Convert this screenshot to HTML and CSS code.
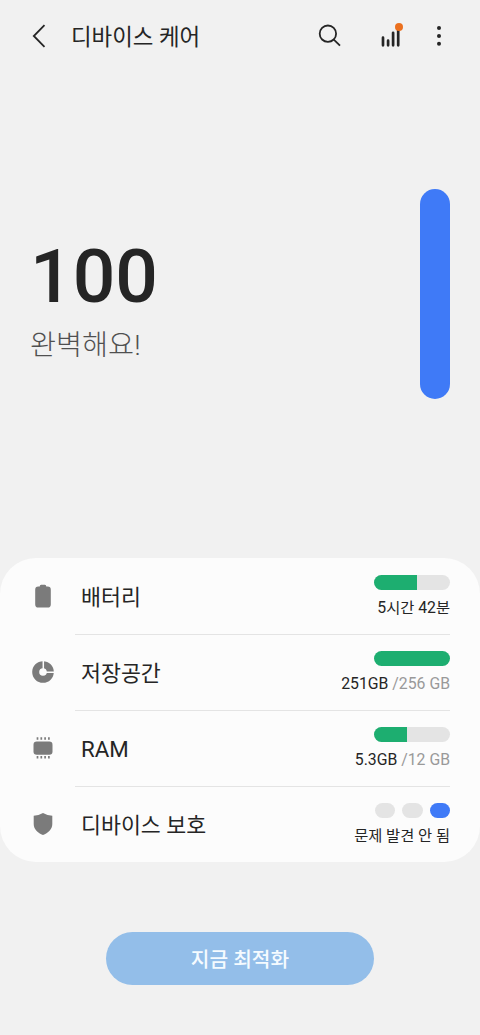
FILE: index.html
```html
<!DOCTYPE html>
<html lang="ko">
<head>
<meta charset="utf-8">
<title>디바이스 케어</title>
<link rel="stylesheet" href="styles.css">
</head>
<body>
<main class="screen">
  <header class="bar">
    <svg class="back" width="14" height="24" viewBox="0 0 14 24"><path d="M12.5 1.2 1.8 12l10.7 10.8"/></svg>
    <h1 class="title">디바이스 케어</h1>
    <svg class="search" width="24" height="24" viewBox="0 0 24 24"><circle cx="9.9" cy="9.7" r="8.2"/><path d="m15.8 15.6 6.2 6"/></svg>
    <svg class="stats" width="24" height="26" viewBox="0 0 24 26"><path class="bars" d="M3 14.2v7.6M8.1 17.2v4.600M13.100 9.300v12.500M18.200 7v14.800"/><circle class="dot" cx="19" cy="3.9" r="4"/></svg>
    <svg class="more" width="6" height="22" viewBox="0 0 6 22"><circle cx="3" cy="3.1" r="2"/><circle cx="3" cy="10.9" r="2"/><circle cx="3" cy="18.7" r="2"/></svg>
  </header>
  <section class="summary">
    <div class="result">
      <div class="score">100</div>
      <div class="message">완벽해요!</div>
    </div>
    <div class="gauge"></div>
  </section>
  <section class="card">
    <div class="row">
      <svg class="icon" width="24" height="24" viewBox="0 0 24 24"><path d="M8.7 2.6Q8.7.8 10.2.8h3.6q1.5 0 1.5 1.8h1.4q3.1 0 3.1 3.1v14.7q0 3.1-3.1 3.1H7.3q-3.1 0-3.1-3.1V5.7q0-3.1 3.1-3.1z"/></svg>
      <div class="body"><span class="name">배터리</span>
        <div class="status"><div class="meter"><div class="fill" style="width:57%"></div></div><div class="value"><span class="digit">5</span>시간 <span class="digit">42</span>분</div></div>
      </div>
    </div>
    <div class="row">
      <svg class="icon" width="24" height="24" viewBox="0 0 24 24"><circle class="ring" cx="12" cy="12" r="7.3"/><path class="gap" d="M12.3 0v9M15 12.2h9"/></svg>
      <div class="body"><span class="name">저장공간</span>
        <div class="status"><div class="meter"><div class="fill" style="width:100%"></div></div><div class="value latin">251GB <span class="total">/256 GB</span></div></div>
      </div>
    </div>
    <div class="row">
      <svg class="icon" width="24" height="24" viewBox="0 0 24 24"><rect x="2.5" y="5.5" width="19" height="13.2" rx="3.2"/><path class="pins" d="M6.5 1.3v2.5M10.3 1.3v2.5M14.1 1.3v2.5M17.9 1.3v2.5M6.5 20.1v2.5M10.3 20.1v2.5M14.1 20.1v2.5M17.9 20.1v2.5"/></svg>
      <div class="body"><span class="name latin-name">RAM</span>
        <div class="status"><div class="meter"><div class="fill" style="width:43%"></div></div><div class="value latin">5.3GB <span class="total">/12 GB</span></div></div>
      </div>
    </div>
    <div class="row">
      <svg class="icon" width="24" height="24" viewBox="0 0 24 24"><path d="M12 1.1q4.4 2.4 9.3 2.7v8.1c0 5.3-4.2 8.8-9.3 11.2C6.9 20.7 2.7 17.2 2.7 11.9V3.8Q7.6 3.5 12 1.1z"/></svg>
      <div class="body"><span class="name">디바이스 보호</span>
        <div class="status"><div class="levels"><i class="level"></i><i class="level"></i><i class="level active"></i></div><div class="value">문제 발견 안 됨</div></div>
      </div>
    </div>
  </section>
  <button class="optimize">지금 최적화</button>
</main>
</body>
</html>
```
FILE: styles.css
```css
* { box-sizing: border-box; }
body { margin: 0; background: #f1f1f1; color: #252525; font-family: Roboto, "Noto Sans CJK KR", sans-serif; }
.screen { height: 1035px; display: flex; flex-direction: column; align-items: center; overflow: hidden; }
svg { display: block; flex: none; }

.bar { width: 100%; height: 72px; display: flex; align-items: center; padding: 0 38px 0 32px; }
.back, .search { fill: none; stroke: #252525; stroke-width: 1.8; }
.title { margin: 0 auto 0 25px; padding-top: 1px; font-size: 22.4px; line-height: 32px; font-weight: 400; white-space: nowrap; }
.search { margin-right: 38px; }
.stats { margin-right: 32px; overflow: visible; }
.bars { fill: none; stroke: #252525; stroke-width: 2.7; stroke-linecap: round; transform: translateY(0.5px); }
.dot { fill: #eb701f; }
.more { fill: #252525; }

.summary { width: 100%; height: 486px; padding: 117px 30px 0; display: flex; justify-content: space-between; }
.result { padding-top: 42px; }
.score { font-size: 75px; line-height: 90px; font-weight: 500; }
.message { margin-top: 5px; font-size: 28.3px; line-height: 40px; font-weight: 300; color: #505050; }
.gauge { width: 30px; height: 210px; border-radius: 15px; background: #3f7af7; }

.card { width: 100%; height: 304px; padding: 1px 30px 0; border-radius: 36px; background: #fcfcfc; }
.row { height: 76px; display: flex; align-items: center; }
.icon { margin-right: 20px; margin-left: 1px; margin-top: -3px; fill: #7b7b7b; }
.ring { fill: none; stroke: #7b7b7b; stroke-width: 7; }
.gap { stroke: #fcfcfc; stroke-width: 1.5; }
.pins { stroke: #7b7b7b; stroke-width: 1.7; }
.body { flex: 1; height: 100%; display: flex; align-items: center; justify-content: space-between; padding-left: 6px; border-bottom: 1px solid #e4e4e4; }
.row:last-child .body { border-bottom-color: transparent; }
.name { padding-top: 2px; font-size: 21.7px; line-height: 32px; white-space: nowrap; }
.latin-name { padding-top: 1px; font-size: 22.3px; }
.status { height: 100%; display: flex; flex-direction: column; align-items: flex-end; padding-top: 16px; }
.meter { width: 76px; height: 15px; border-radius: 8px; overflow: hidden; background: #e4e4e4; }
.fill { height: 100%; background: #1dae70; }
.value { margin-top: 7px; font-size: 15.3px; line-height: 22px; white-space: nowrap; }
.latin, .digit { font-size: 15.8px; }
.total { color: #999; }
.levels { display: flex; gap: 7px; height: 15px; }
.level { width: 20.5px; height: 15px; border-radius: 8px; background: #e4e4e4; }
.active { background: #3f7af7; }

.optimize { margin-top: 70px; width: 268px; height: 53px; padding: 2px 0 0; border: 0; border-radius: 27px; background: #93bee9; color: #f5fbff; font: 500 20.3px/30px Roboto, "Noto Sans CJK KR", sans-serif; }
```
